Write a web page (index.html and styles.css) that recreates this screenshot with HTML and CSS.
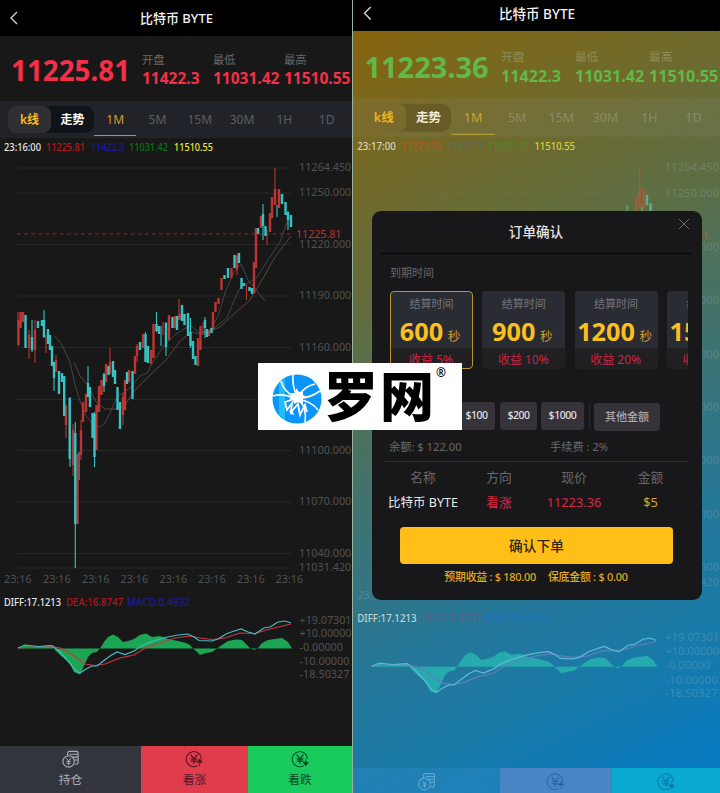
FILE: index.html
```html
<!DOCTYPE html>
<html lang="zh-CN">
<head>
<meta charset="utf-8">
<title>比特币 BYTE</title>
<link rel="stylesheet" href="styles.css">
</head>
<body>
<svg class="defs" aria-hidden="true">
  <symbol id="chart" viewBox="0 156 352 590">
    <path class="grid" d="M17 168H292M17 193H292M17 244.5H292M17 296H292M17 347.5H292M17 399.5H292M17 450.5H292M17 502H292M17 553.5H292M17 568H292"/>
    <path class="last" d="M17 234H294"/>
    <path class="ma1" d="M55 336L62 345L70 362L75 385L80 401L86 416L94 425L100 427L105 423L110 413L117 397L130 388L140 376L147 373L153 362L163 347L175 335L190 325L200 333L210 330L218 316L226 290L234 272L241 264L248 280L257 291L265 301"/>
    <path class="ma1" d="M200 332L210 331L227 318L233 303L240 288L257 277L270 257L280 242L287 222L290 217"/>
    <path class="ma2" d="M74 362L80 376L88 385L96 402L105 409L118 409L125 405L135 390L150 375L165 361L172 352L180 341L192 332L200 334L210 331L220 327L235 313L250 300L262 280L275 257L291 236"/>
    <path class="wick up" d="M18 312V346M29 330V359M35 320V363M46 335V353M56 355V372M66 404V438M73 424V476M81 420V460M110 348V372M123 393V425M137 344V362M163 322V335M179 299V320M203 322V335M246.500 285V300M267 230V245M275 168V204M237 254V275"/>
    <path class="wick down" d="M32 320V352M44 310V338M54 362V391M75.300 422V568M79 452V480M88 366V395M104 373V392M156.500 312V332M161 326V346M166 322V356M190.500 318V348M205 317V338M263 204V240M277 205V217M288 211V230M94.500 412V467M70 397V467M145.500 332V362"/>
    <path class="body up" d="M18.500 320V345M20.500 312V328M23 312V322M29 335V348M35 330V350M56 360V372M66 406V425M73 430V465M77.500 454V524M81 430V455M83 402V422M86 394V412M96.500 405V450M99 386V412M101.500 380V395M106 364V382M110 362V374M123 397V415M125 380V410M129 370V382M135 356V374M137 346V356M143 334V348M151 350V364M153.500 324V358M169 315V340M175 316V328M179.500 314V320M198 338V366M200.500 326V350M209 330V336M213 312V330M215.500 302V312M218.500 298V304M221.500 278V290M231.500 268V278M237 256V270M254 262V293M256 228V268M261 216V228M270 213V232M272 197V218M275 189V205M279 189V208"/>
    <path class="body down" d="M25.500 315V348M32 337V350M38 321V328M42 320V326M44 320V337M48 329V344M50 335V350M52 346V366M54 362V378M59 371V394M62 373V382M64.200 376V416M69.700 398V459M75.300 433V524M88 383V397M90 387V407M92.500 413V438M94.500 414V457M104 374V386M108.500 366V375M113 361V377M115 370V384M117.500 387V410M120 402V429M127 372V384M132.500 371V399M140 342V350M145.500 334V362M148 346V363M156.500 324V331M159 326V334M166 323V347M172.500 317V328M177 316V330M182 305V321M184.500 314V325M188 313V336M190.500 332V346M193 341V359M195.500 356V365M205 320V328M207 329V337M211.500 328V333M224.500 275V279M228 268V278M234.500 255V268M239 253V263M241.500 278V289M244 283V286M249.500 287V291M252 288V294M258 228V234M263 214V226M265.500 226V236M282 194V204M285.500 202V215M288 212V220M291 215V227"/>
    <g class="axis">
      <text x="299" y="171">11264.450</text><text x="299" y="196">11250.000</text><text x="299" y="248">11220.000</text><text x="299" y="299">11190.000</text><text x="299" y="351">11160.000</text><text x="299" y="402">11130.000</text><text x="299" y="453.500">11100.000</text><text x="299" y="505">11070.000</text><text x="299" y="556.500">11040.000</text><text x="299" y="571">11031.420</text>
      <text x="4" y="583">23:16</text><text x="43" y="583">23:16</text><text x="82" y="583">23:16</text><text x="120.500" y="583">23:16</text><text x="159.500" y="583">23:16</text><text x="198" y="583">23:16</text><text x="237" y="583">23:16</text><text x="275.500" y="583">23:16</text>
      <text x="299.500" y="624" textLength="52">+19.07301</text><text x="299.500" y="637" textLength="52">+10.00000</text><text x="299.500" y="651">-0.00000</text><text x="299.500" y="665" textLength="50">-10.00000</text><text x="299.500" y="677.500" textLength="50">-18.50327</text>
    </g>
    <text class="now" x="296" y="237.500" textLength="45.500">11225.81</text>
    <g class="legend">
      <text class="c-white" x="4" y="605.500" textLength="57" lengthAdjust="spacingAndGlyphs">DIFF:17.1213</text>
      <text class="c-red" x="66" y="605.500" textLength="57" lengthAdjust="spacingAndGlyphs">DEA:16.8747</text>
      <text class="c-blue" x="127" y="605.500" textLength="63" lengthAdjust="spacingAndGlyphs">MACD:0.4932</text>
    </g>
    <path class="hist" d="M18 648.500L25 645.500L32 646.500L52 645.500L55 650L60 655L66 660L70 664L74 672L80 674.500L83 668L88 657L92 653L97 652L101 647L104 642L108 637L113 634.500L118 637L123 642L128 641L134 639L140 635L146 633.500L152 637L160 636L168 639L178 641L186 643L190 645L193 648.500H101H193L196 651L200 655L206 653L212 652L217 648.500L222 645L228 641L236 639.500L242 640L247 645L250 648L254 650L258 648L262 643L268 640L282 638L288 642L292 648.500Z"/>
    <path class="dea" d="M18 648L50 646L60 648L70 653L78 659L85 664L95 665.500L105 664L120 658L134 655L145 648L160 643L175 638L190 636L200 638L212 639.500L225 638L240 633L255 633.500L270 629L291 624"/>
    <path class="diff" d="M18 648L25 645L38 646.500L52 645.500L60 652L68 661L76 671L80 673L86 669L92 666L97 666L102 662L110 656L117 652L125 654.500L134 651L143 645L152 641.500L165 637.500L178 635L188 634L194 637L199 640.500L212 641L218 639L226 634L234 631L241 629L248 632L255 634L264 628L270 627L278 622L285 621L291 623"/>
  </symbol>
  <symbol id="back" viewBox="0 0 10 14"><path d="M8 1L2 7L8 13" fill="none" stroke="currentColor" stroke-width="1.300"/></symbol>
  <symbol id="hold" viewBox="0 0 20 20">
    <path d="M7 6V3.500Q7 1.500 9 1.500H16Q18 1.500 18 3.500V13Q18 15 16 15H14.500M9 4.500H18M12 7.500H18M14 10.500H18" fill="none" stroke="currentColor" stroke-width="1.200"/>
    <circle cx="8" cy="12" r="6" fill="none" stroke="currentColor" stroke-width="1.200"/>
    <path d="M5.500 8.500L8 11.500L10.500 8.500M8 11.500V16M5.700 12H10.300M5.700 14H10.300" fill="none" stroke="currentColor"/>
  </symbol>
  <symbol id="coin" viewBox="0 0 20 20">
    <path d="M17.300 9.500A8 8 0 1 0 13.500 16.500" fill="none" stroke="currentColor" stroke-width="1.100"/>
    <path d="M6 5L9.500 9.200L13 5M9.500 9.200V14.500M6 9.500H13M6 11.800H13" fill="none" stroke="currentColor" stroke-width="1.300"/>
  </symbol>
</svg>

<main class="board">
  <section class="phone">
    <div class="screen">
      <header class="nav"><svg class="back"><use href="#back"/></svg><h1>比特币 BYTE</h1></header>
      <div class="stats">
        <strong class="price">11225.81</strong>
        <dl><div><dt>开盘</dt><dd>11422.3</dd></div><div><dt>最低</dt><dd>11031.42</dd></div><div><dt>最高</dt><dd>11510.55</dd></div></dl>
      </div>
      <nav class="tabs">
        <div class="switch"><b class="on">k线</b><b>走势</b></div>
        <span class="tab on">1M</span><span class="tab">5M</span><span class="tab">15M</span><span class="tab">30M</span><span class="tab">1H</span><span class="tab">1D</span>
      </nav>
      <svg class="legend quote" viewBox="0 0 352 18">
        <text class="c-white" x="4" y="13" textLength="37" lengthAdjust="spacingAndGlyphs">23:16:00</text>
        <text class="c-red" x="46" y="13" textLength="39" lengthAdjust="spacingAndGlyphs">11225.81</text>
        <text class="c-blue" x="91" y="13" textLength="33" lengthAdjust="spacingAndGlyphs">11422.3</text>
        <text class="c-green" x="129" y="13" textLength="39" lengthAdjust="spacingAndGlyphs">11031.42</text>
        <text class="c-yellow" x="174" y="13" textLength="39" lengthAdjust="spacingAndGlyphs">11510.55</text>
      </svg>
      <svg class="chart"><use href="#chart"/></svg>
      <footer class="actions">
        <div class="act hold"><svg><use href="#hold"/></svg>持仓</div>
        <div class="act rise"><svg viewBox="0 0 20 20"><use href="#coin"/><path d="M15.500 17V13H13L15.500 9.500L18 13H15.500" fill="currentColor" stroke="currentColor"/></svg>看涨</div>
        <div class="act fall"><svg viewBox="0 0 20 20"><use href="#coin"/><path d="M15.500 9.500V13H13L15.500 16.500L18 13H15.500" fill="currentColor" stroke="currentColor"/></svg>看跌</div>
      </footer>
    </div>
  </section>

  <section class="phone dimmed">
    <div class="screen">
      <header class="nav"><svg class="back"><use href="#back"/></svg><h1>比特币 BYTE</h1></header>
      <div class="stats">
        <strong class="price">11223.36</strong>
        <dl><div><dt>开盘</dt><dd>11422.3</dd></div><div><dt>最低</dt><dd>11031.42</dd></div><div><dt>最高</dt><dd>11510.55</dd></div></dl>
      </div>
      <nav class="tabs">
        <div class="switch"><b class="on">k线</b><b>走势</b></div>
        <span class="tab on">1M</span><span class="tab">5M</span><span class="tab">15M</span><span class="tab">30M</span><span class="tab">1H</span><span class="tab">1D</span>
      </nav>
      <svg class="legend quote" viewBox="0 0 352 18">
        <text class="c-white" x="4" y="13" textLength="37" lengthAdjust="spacingAndGlyphs">23:17:00</text>
        <text class="c-red" x="46" y="13" textLength="39" lengthAdjust="spacingAndGlyphs">11223.36</text>
        <text class="c-blue" x="91" y="13" textLength="33" lengthAdjust="spacingAndGlyphs">11422.3</text>
        <text class="c-green" x="129" y="13" textLength="39" lengthAdjust="spacingAndGlyphs">11031.42</text>
        <text class="c-yellow" x="174" y="13" textLength="39" lengthAdjust="spacingAndGlyphs">11510.55</text>
      </svg>
      <svg class="chart"><use href="#chart"/></svg>
      <footer class="actions">
        <div class="act hold"><svg><use href="#hold"/></svg></div>
        <div class="act rise"><svg viewBox="0 0 20 20"><use href="#coin"/><path d="M15.500 17V13H13L15.500 9.500L18 13H15.500" fill="currentColor" stroke="currentColor"/></svg></div>
        <div class="act fall"><svg viewBox="0 0 20 20"><use href="#coin"/><path d="M15.500 9.500V13H13L15.500 16.500L18 13H15.500" fill="currentColor" stroke="currentColor"/></svg></div>
      </footer>
    </div>
  </section>

  <div class="modal">
    <h2>订单确认</h2>
    <svg class="close" viewBox="0 0 12 12"><path d="M1 1L11 11M11 1L1 11" stroke="currentColor" fill="none"/></svg>
    <p class="label">到期时间</p>
    <div class="plans">
      <div class="plan on"><div class="term"><span>结算时间</span><p><b>600</b>秒</p></div><em>收益 5%</em></div>
      <div class="plan"><div class="term"><span>结算时间</span><p><b>900</b>秒</p></div><em>收益 10%</em></div>
      <div class="plan"><div class="term"><span>结算时间</span><p><b>1200</b>秒</p></div><em>收益 20%</em></div>
      <div class="plan"><div class="term"><span>结算时间</span><p><b>1500</b>秒</p></div><em>收益 25%</em></div>
    </div>
    <div class="amounts"><span class="a100">$100</span><span class="a200">$200</span><span class="a1000">$1000</span><i></i><span class="other">其他金额</span></div>
    <div class="balance"><span>余额: $ 122.00</span><span>手续费 : 2%</span></div>
    <div class="order">
      <span>名称</span><span>方向</span><span>现价</span><span>金额</span>
      <b class="name">比特币 BYTE</b><b class="red">看涨</b><b class="red">11223.36</b><b class="gold">$5</b>
    </div>
    <div class="confirm">确认下单</div>
    <div class="forecast"><span>预期收益 : $ 180.00</span><span>保底金额 : $ 0.00</span></div>
  </div>

  <div class="brand">
    <svg viewBox="0 0 50 50">
      <circle cx="25" cy="25" r="24.500" fill="#0b94fa"/>
      <path d="M7 9Q12 4 13 4V46Q8 42 7 40Z" fill="#20bdf8"/>
      <path d="M25 22Q20 12 21 1M23 23Q12 18 9 7M22 24Q10 19 1 22M27 21Q33 12 43 10M28 24Q38 24 48 17M28 26Q39 27 46 36M28 27Q35 35 33 48" fill="none" stroke="#fff" stroke-width="1.600"/>
      <path d="M22 25L13 28L15 36L20 29L19 38L26 30L28 41L33 31L35 38" fill="none" stroke="#fff" stroke-width="1.800"/>
      <path d="M17 37L20 35L22 41L19 40Z" fill="#fff"/>
      <path d="M24 14L27 18L31 17L31 21L35 23L31 25L31 30L26 28L22 30L21 26L17 25L21 23L19 19L24 19Z" fill="#fff"/>
    </svg>
    <span class="word">罗网</span><sup>®</sup>
  </div>
</main>
</body>
</html>
```

FILE: styles.css
```css
* { box-sizing: border-box; margin: 0; padding: 0; }
body { background: #18181a; font-family: "Noto Sans", "Noto Sans CJK SC", sans-serif; overflow: hidden; }
.defs { position: absolute; width: 0; height: 0; }
.board { position: relative; display: flex; width: 720px; height: 793px; overflow: hidden; }
.phone {
  --grid: #272728; --last: #7d2c2a; --ma1: #434b4a; --ma2: #5f4a43; --up: #bd3431; --down: #35c3c4;
  --axis: #515154; --now: #b53431; --hist: #1ba654; --dea: #cf3440; --diff: #45bcc4;
  --white: #e6e6e6; --red: #b5151d; --blue: #1a1aa0; --green: #0b7316; --yellow: #e8e63c;
  width: 352px; height: 793px; overflow: hidden; background: #181818;
}
.screen { width: 352px; height: 793px; display: flex; flex-direction: column; }

.nav { height: 36px; flex: none; background: #000; color: #f2f2f2; display: flex; align-items: center; justify-content: center; position: relative; }
.nav h1 { font-size: 13px; font-weight: 500; line-height: 36px; white-space: nowrap; padding-left: 1px; }
.back { position: absolute; left: 9px; top: 11px; width: 10px; height: 14px; color: #d8d8d8; }

.stats { height: 65px; flex: none; display: flex; color: #f52f48; padding-left: 11px; white-space: nowrap; }
.price { font-size: 27.800px; line-height: 68px; width: 130px; flex: none; }
.stats dl { display: grid; grid-template-columns: 71px 71px 71px; padding: 15px 0 0 1px; }
.stats dt { font-size: 11.300px; line-height: 18px; color: #68686a; }
.stats dd { font-size: 15.500px; line-height: 19px; font-weight: 700; }

.tabs { height: 37px; flex: none; background: #212329; display: flex; padding-left: 8px; }
.switch { display: flex; width: 86px; height: 27px; margin-top: 5px; border-radius: 9px; background: #121319; color: #fff; font-size: 12px; line-height: 27px; text-align: center; }
.switch b { flex: 1; font-weight: 600; }
.switch .on { background: #303032; border-radius: 8px; color: #fbb91a; }
.tab { width: 42.300px; text-align: center; font-size: 12px; line-height: 38px; color: #5d5e62; height: 35px; }
.tab.on { color: #cf9e28; border-bottom: 1.500px solid #bd932a; }

.legend { font-size: 10.500px; font-weight: 500; }
.quote { width: 352px; height: 18px; flex: none; display: block; }
.c-white { fill: var(--white); }
.c-red { fill: var(--red); }
.c-blue { fill: var(--blue); }
.c-green { fill: var(--green); }
.c-yellow { fill: var(--yellow); }

.chart { width: 352px; height: 590px; flex: none; display: block; }
.grid { stroke: var(--grid); fill: none; }
.last { stroke: var(--last); stroke-dasharray: 4 3.100; fill: none; }
.ma1 { stroke: var(--ma1); stroke-width: .9; fill: none; }
.ma2 { stroke: var(--ma2); stroke-width: .9; fill: none; }
.wick { stroke-width: 1.100; fill: none; }
.body { stroke-width: 2.400; fill: none; }
.up { stroke: var(--up); }
.down { stroke: var(--down); }
.axis { fill: var(--axis); font-size: 10.800px; }
.now { fill: var(--now); font-size: 10.800px; }
.hist { fill: var(--hist); }
.dea { stroke: var(--dea); stroke-width: 1.200; fill: none; }
.diff { stroke: var(--diff); stroke-width: 1.200; fill: none; }

.actions { height: 47px; flex: none; display: grid; grid-template-columns: 141px 107px 104px; }
.act { display: flex; flex-direction: column; align-items: center; padding-top: 4px; font-size: 11.800px; line-height: 20px; }
.act svg { width: 19px; height: 19px; flex: none; }
.hold { background: #32353c; color: #aaaeb4; }
.rise { background: #e13c4c; color: #551722; }
.fall { background: #19ca5c; color: #0a4a25; }

.dimmed {
  --grid: rgba(170, 180, 150, .09); --last: rgba(180, 80, 50, .4); --ma1: rgba(150, 170, 160, .3); --ma2: rgba(160, 140, 110, .3);
  --up: #a1603c; --down: #55b495; --axis: rgba(160, 180, 190, .29); --now: rgba(190, 100, 60, .7);
  --hist: #25abad; --dea: #5e7fba; --diff: #61b7d3;
  --white: #bfd4cf; --red: #5c6389; --blue: #1b6fc4; --green: #4f832d; --yellow: #d5d13c;
  width: 368px; border-left: 1px solid #9db3a2;
  background: linear-gradient(154deg, #86640f 4%, #79681e 13%, #6b6b32 25%, #5d6e44 36%, #4b7160 46%, #3a7477 56%, #267797 69%, #197aa8 82%, #067bc4 98%);
}
.dimmed .screen { transform: translateY(-6.400px) scale(1.0425, 1.038); transform-origin: 0 0; }
.dimmed .nav h1 { padding-top: 1px; }
.dimmed .back { top: 12px; }
.dimmed .stats { color: #62b849; }
.dimmed .stats dl { padding-top: 16px; }
.dimmed .stats dt { color: #8d8d59; }
.dimmed .tabs { background: rgba(140, 150, 140, .13); }
.dimmed .switch { background: rgba(70, 50, 20, .3); color: #f0eadc; }
.dimmed .switch .on { background: rgba(150, 130, 60, .4); color: #eeb51c; }
.dimmed .tab { color: #8b8c68; }
.dimmed .tab.on { color: #c7a52b; border-color: #bba52d; }
.dimmed .quote { --white: #d6d4ba; --red: #b9521f; --blue: #626a6a; }
.dimmed .act { color: rgba(20, 90, 150, .6); }
.dimmed .hold { background: rgba(50, 140, 200, .35); color: rgba(150, 200, 225, .5); }
.dimmed .rise { background: #4985c5; }
.dimmed .fall { background: #09a9d1; }

.modal { position: absolute; left: 372px; top: 211px; width: 330px; height: 389px; border-radius: 9px; background: #18181a; color: #68686b; overflow: hidden; white-space: nowrap; }
.modal h2 { font-size: 13.600px; font-weight: 500; color: #e4e4e4; text-align: center; line-height: 42px; height: 43px; margin: 0 10px 0 8px; border-bottom: 1px solid #070708; }
.close { position: absolute; left: 306px; top: 7px; width: 12px; height: 12px; color: #707073; }
.label { font-size: 11px; line-height: 16px; margin: 11px 0 9.500px 18px; }
.plans { display: flex; gap: 9.300px; margin-left: 18px; width: 298px; height: 78px; overflow: hidden; }
.plan { width: 83px; flex: none; height: 78px; border-radius: 4px; background: #202022; overflow: hidden; text-align: center; position: relative; }
.plan.on::after { content: ""; position: absolute; inset: 0; border: 1.500px solid #bb922b; border-radius: 4px; }
.term { background: #2a2c33; height: 57px; padding-top: 5px; }
.term span { display: block; font-size: 11px; line-height: 16px; color: #737478; }
.term p { font-size: 12.500px; color: #c99b2a; line-height: 38px; height: 36px; margin-left: -3px; }
.term b { font-size: 25.300px; color: #fbbf1f; margin-right: 4.500px; }
.plan em { display: block; font-style: normal; font-size: 12px; line-height: 23px; color: #d0233f; margin-left: -1px; }
.amounts { display: flex; align-items: center; height: 30px; margin: 32px 0 0 86px; color: #e0e0e0; font-size: 10.500px; font-weight: 500; text-align: center; }
.amounts span { background: #36323a; border-radius: 3px; height: 28px; line-height: 27px; letter-spacing: -.45px; }
.a100 { width: 37px; margin-right: 5px; }
.a200 { width: 37px; margin-right: 4px; }
.a1000 { width: 43px; }
.amounts i { width: 1px; height: 26px; margin: 0 4.500px; background: #29292c; }
.amounts .other { width: 66px; font-size: 11px; letter-spacing: 0; color: #aaa8ad; position: relative; top: 1px; }
.balance { display: grid; grid-template-columns: 161px 1fr; margin: 0 14px 0 13px; padding-left: 4px; height: 31px; line-height: 32px; font-size: 11.200px; border-bottom: 1px solid #303033; }
.order { display: grid; grid-template-columns: 90px 62px 88px 65px; margin-left: 6px; text-align: center; font-size: 12.800px; line-height: 25px; padding-top: 3.500px; }
.order b { font-weight: 400; }
.order .name { color: #e9e9e9; font-size: 12.500px; }
.order .red { color: #dc2743; }
.order .gold { color: #d9a728; }
.confirm { margin: 11.500px 0 0 28px; width: 273px; height: 37px; border-radius: 4px; background: #ffbe18; color: #30260a; text-align: center; font-size: 13.700px; font-weight: 500; line-height: 38px; }
.forecast { display: flex; justify-content: center; gap: 12px; font-size: 10.900px; line-height: 16px; margin: 5px 2px 0 0; color: #e2aa1e; letter-spacing: -.25px; font-weight: 500; }

.brand { position: absolute; left: 258px; top: 363px; width: 204px; height: 67px; background: #fff; color: #000; display: flex; align-items: flex-start; padding-left: 14px; }
.brand svg { width: 50px; height: 50px; flex: none; margin-top: 11px; }
.word { font: 900 54px/62px "Noto Sans CJK SC", sans-serif; margin-left: 2px; letter-spacing: 2px; }
.brand sup { font-size: 12px; line-height: 20px; font-weight: 600; margin-left: 0; }
```
